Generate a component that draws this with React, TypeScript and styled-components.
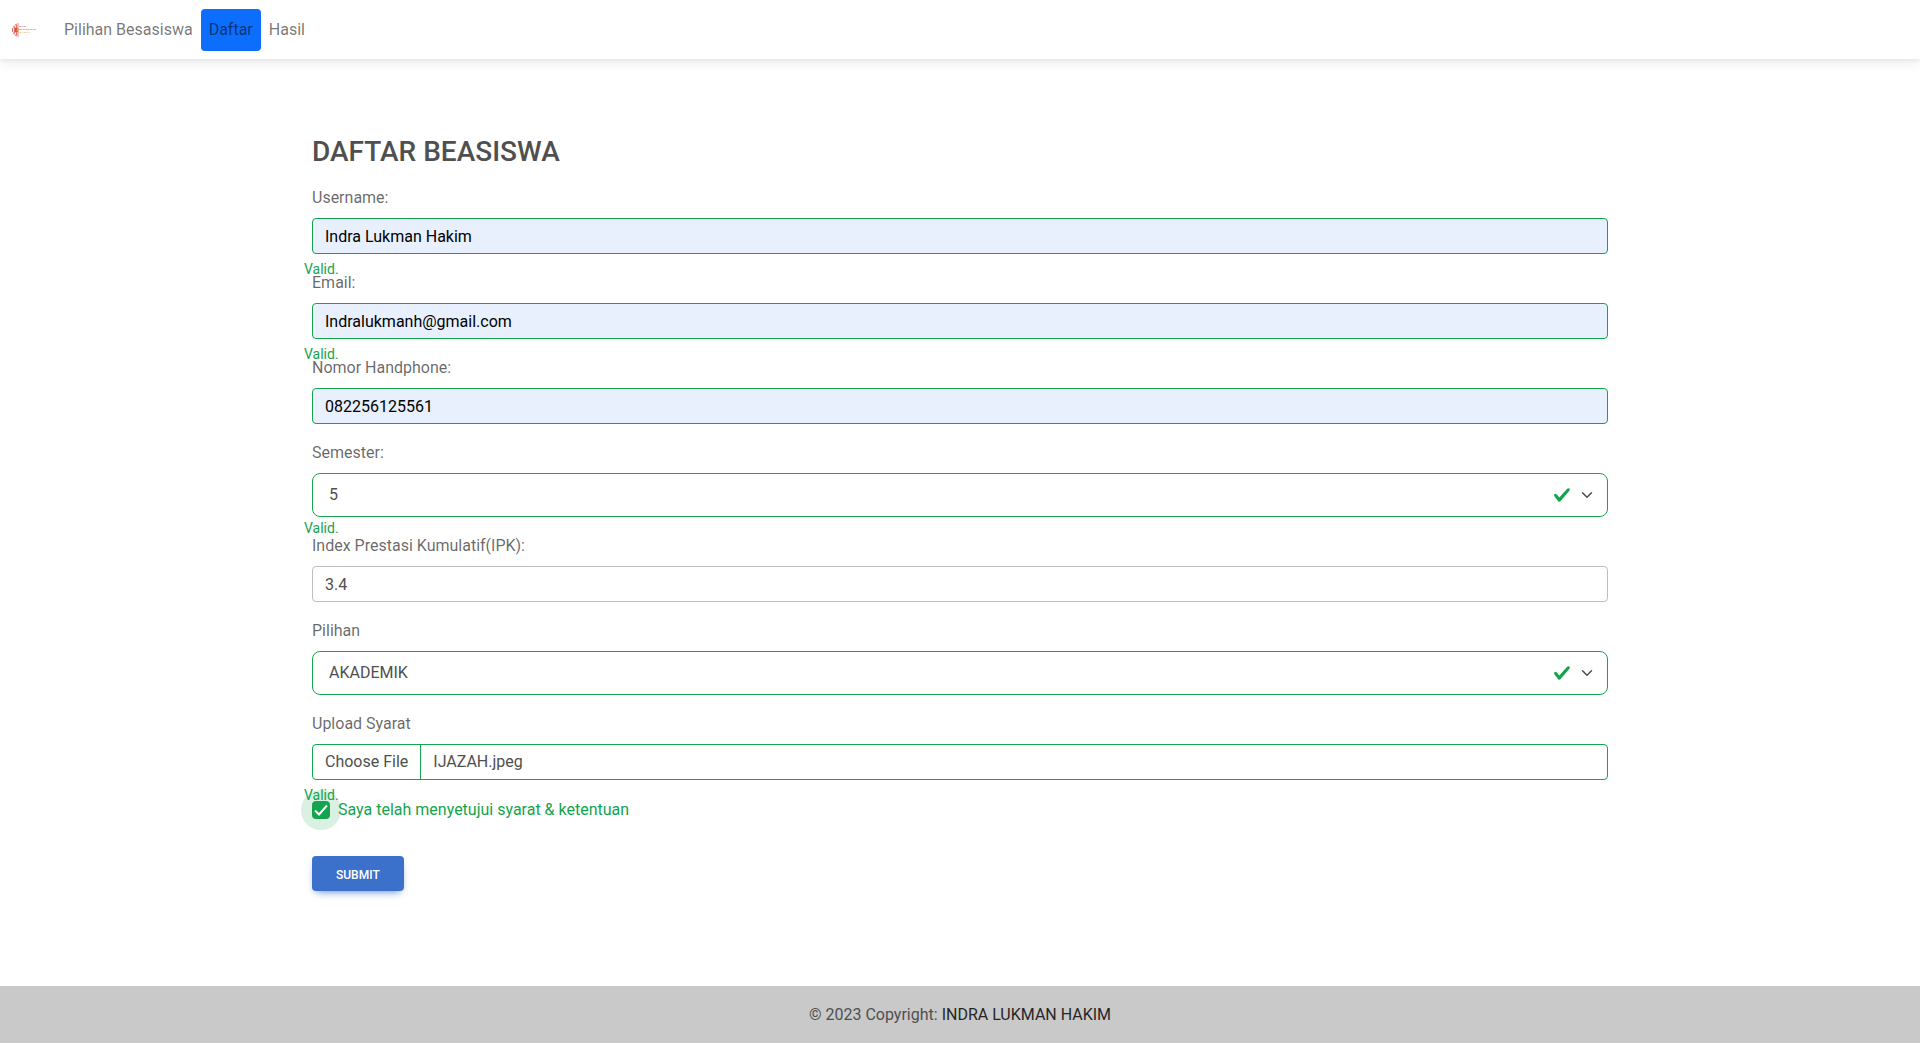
import React, { useState } from "react";
import styled, { createGlobalStyle, css } from "styled-components";

const success = "#14a44d";

const chevron = `url("data:image/svg+xml,%3csvg xmlns='http://www.w3.org/2000/svg' viewBox='0 0 16 16'%3e%3cpath fill='none' stroke='%234f4f4f' stroke-linecap='round' stroke-linejoin='round' stroke-width='2' d='m2 5 6 6 6-6'/%3e%3c/svg%3e")`;
const tick = `url("data:image/svg+xml,%3csvg xmlns='http://www.w3.org/2000/svg' viewBox='0 0 8 8'%3e%3cpath fill='%2314a44d' d='M2.3 6.73.6 4.53c-.4-1.04.46-1.4 1.1-.8l1.1 1.4 3.4-3.8c.6-.63 1.6-.27 1.2.7l-4 4.6c-.43.5-.8.4-1.1.1z'/%3e%3c/svg%3e")`;
const boxTick = `url("data:image/svg+xml,%3csvg xmlns='http://www.w3.org/2000/svg' viewBox='0 0 18 18'%3e%3cpath fill='none' stroke='white' stroke-width='2' d='M3 9.5 7 13.5 15 4.5'/%3e%3c/svg%3e")`;

const GlobalStyle = createGlobalStyle`
  *, *::before, *::after { box-sizing: border-box; }
  body {
    margin: 0;
    background: #fff;
    color: #4f4f4f;
    font-family: Roboto, sans-serif;
    font-size: 16px;
    line-height: 26px;
  }
  input, select, button { font: inherit; }
`;

const Navbar = styled.header`
  display: flex;
  align-items: center;
  gap: 20px;
  padding: 9px 12px 8px;
  background: #fff;
  box-shadow: 0 4px 12px rgba(0, 0, 0, 0.07), 0 2px 4px rgba(0, 0, 0, 0.05);
`;

const Brand = styled.a`
  display: flex;
  width: 24px;
`;

const Nav = styled.nav`
  display: flex;
`;

const NavLink = styled.a<{ $active?: boolean }>`
  padding: 8px;
  border-radius: 4px;
  color: rgba(0, 0, 0, 0.55);
  text-decoration: none;
  ${(p) => p.$active && css`background: #0d6efd;`}
`;

const Main = styled.main`
  max-width: 1320px;
  margin: 0 auto;
  padding: 76px 12px 95px;
`;

const Title = styled.h1`
  margin: 0 0 16px;
  font-size: 28px;
  font-weight: 500;
  line-height: 34px;
`;

const Form = styled.form`
  display: flex;
  flex-direction: column;
`;

const Field = styled.div`
  position: relative;
  margin-bottom: 16px;
`;

const Label = styled.label`
  display: block;
  margin-bottom: 8px;
  color: rgba(0, 0, 0, 0.6);
  line-height: 25px;
`;

const Input = styled.input<{ $filled?: boolean }>`
  display: block;
  width: 100%;
  height: 36px;
  padding: 4px 12px;
  border: 1px solid ${(p) => (p.$filled ? success : "#bdbdbd")};
  border-radius: 4px;
  outline: none;
  background: ${(p) => (p.$filled ? "#e8f0fe" : "#fff")};
  color: ${(p) => (p.$filled ? "#000" : "#4f4f4f")};
`;

const Select = styled.select`
  display: block;
  width: 100%;
  height: 44px;
  padding: 6px 64px 6px 16px;
  border: 1px solid ${success};
  border-radius: 8px;
  outline: none;
  appearance: none;
  background-color: #fff;
  background-image: ${chevron}, ${tick};
  background-repeat: no-repeat;
  background-position: right 12px center, right 36px center;
  background-size: 16px 12px, 18px 18px;
  color: #4f4f4f;
`;

const Feedback = styled.div<{ $close?: boolean }>`
  position: absolute;
  top: 100%;
  left: -8px;
  margin-top: ${(p) => (p.$close ? 0 : 4)}px;
  color: ${success};
  font-size: 14px;
  line-height: 22px;
`;

const FilePicker = styled.label`
  display: flex;
  height: 36px;
  border: 1px solid ${success};
  border-radius: 4px;
  line-height: 34px;
  cursor: pointer;
`;

const HiddenFile = styled.input`
  position: absolute;
  width: 1px;
  height: 1px;
  opacity: 0;
`;

const FileButton = styled.span`
  padding: 0 12px;
  border-right: 1px solid ${success};
`;

const FileName = styled.span`
  padding: 0 12px;
`;

const CheckRow = styled.div`
  display: flex;
  align-items: center;
  gap: 8px;
  margin-bottom: 32px;
  line-height: 28px;
`;

const Checkbox = styled.input`
  appearance: none;
  width: 18px;
  height: 18px;
  margin: 0;
  border: 2px solid ${success};
  border-radius: 4px;
  outline: none;
  position: relative;

  &:checked {
    background: ${success} ${boxTick} center / 18px 18px border-box no-repeat;
  }

  &::before {
    content: "";
    position: absolute;
    inset: -13px;
    border-radius: 50%;
    background: ${success};
    opacity: 0.16;
    clip-path: path(evenodd, "M0 0H40V40H0Z M15 11H25A4 4 0 0 1 29 15V25A4 4 0 0 1 25 29H15A4 4 0 0 1 11 25V15A4 4 0 0 1 15 11Z");
  }
`;

const CheckLabel = styled.label`
  color: ${success};
`;

const Submit = styled.button`
  align-self: flex-start;
  padding: 10px 24px 7px;
  border: 0;
  border-radius: 4px;
  background: #3b71ca;
  box-shadow: 0 4px 9px -4px #3b71ca;
  color: #fff;
  font-size: 12px;
  font-weight: 500;
  line-height: 18px;
  text-transform: uppercase;
  cursor: pointer;
`;

const Footer = styled.footer`
  padding: 16px;
  background: #c9c9c9;
  text-align: center;
  line-height: 25px;
`;

const FooterLink = styled.a`
  color: #262626;
  text-decoration: none;
`;

function Logo() {
  return (
    <svg width="24" height="16" viewBox="0 0 24 16" aria-hidden="true">
      <g fill="none" stroke="#e0453f" strokeWidth="1">
        <path d="M6 1V15" opacity=".6" />
        <path d="M5 2 3 3M5 14 3 13M3 4 1 5M3 12 1 11M.5 6V10" opacity=".75" />
        <path d="M2.5 5V11M4.500 3V13" strokeWidth="1.500" opacity=".75" />
      </g>
      <path d="M3 6H6V10H3Z" fill="#c9503a" />
      <path d="M4.500 6.500H6.500V9.500H4.500Z" fill="#dc9a3c" />
      <path d="M7 4.500H14" stroke="#ee8a88" strokeWidth="1" strokeDasharray="2 .5" opacity=".7" />
      <path d="M7 7.500H24" stroke="#e87b7b" strokeWidth="1" strokeDasharray="3 .5" opacity=".6" />
      <path d="M7 10.500H18" stroke="#e3c184" strokeWidth="1" strokeDasharray="2 .5" opacity=".6" />
    </svg>
  );
}

interface TextFieldProps {
  id: string;
  label: string;
  value: string;
  type?: string;
  filled?: boolean;
  valid?: boolean;
}

function TextField({ id, label, value, type = "text", filled, valid }: TextFieldProps) {
  return (
    <Field>
      <Label htmlFor={id}>{label}</Label>
      <Input id={id} type={type} defaultValue={value} $filled={filled} />
      {valid && <Feedback>Valid.</Feedback>}
    </Field>
  );
}

interface SelectFieldProps {
  id: string;
  label: string;
  value: string;
  options: string[];
  valid?: boolean;
}

function SelectField({ id, label, value, options, valid }: SelectFieldProps) {
  return (
    <Field>
      <Label htmlFor={id}>{label}</Label>
      <Select id={id} defaultValue={value}>
        {options.map((o) => (
          <option key={o}>{o}</option>
        ))}
      </Select>
      {valid && <Feedback $close>Valid.</Feedback>}
    </Field>
  );
}

export default function App() {
  const [fileName, setFileName] = useState("IJAZAH.jpeg");

  return (
    <>
      <GlobalStyle />
      <Navbar>
        <Brand href="#" aria-label="Beranda">
          <Logo />
        </Brand>
        <Nav>
          <NavLink href="#pilihan">Pilihan Besasiswa</NavLink>
          <NavLink href="#daftar" $active>Daftar</NavLink>
          <NavLink href="#hasil">Hasil</NavLink>
        </Nav>
      </Navbar>
      <Main>
        <Title>DAFTAR BEASISWA</Title>
        <Form onSubmit={(e) => e.preventDefault()}>
          <TextField id="username" label="Username:" value="Indra Lukman Hakim" filled valid />
          <TextField id="email" label="Email:" type="email" value="Indralukmanh@gmail.com" filled valid />
          <TextField id="phone" label="Nomor Handphone:" type="tel" value="082256125561" filled />
          <SelectField id="semester" label="Semester:" value="5" options={["1", "2", "3", "4", "5", "6", "7", "8"]} valid />
          <TextField id="ipk" label="Index Prestasi Kumulatif(IPK):" value="3.4" />
          <SelectField id="pilihan" label="Pilihan" value="AKADEMIK" options={["AKADEMIK", "NON AKADEMIK"]} />
          <Field>
            <Label htmlFor="syarat">Upload Syarat</Label>
            <FilePicker>
              <HiddenFile
                id="syarat"
                type="file"
                onChange={(e) => setFileName(e.target.files?.[0]?.name ?? "")}
              />
              <FileButton>Choose File</FileButton>
              <FileName>{fileName}</FileName>
            </FilePicker>
            <Feedback>Valid.</Feedback>
          </Field>
          <CheckRow>
            <Checkbox id="setuju" type="checkbox" defaultChecked />
            <CheckLabel htmlFor="setuju">Saya telah menyetujui syarat &amp; ketentuan</CheckLabel>
          </CheckRow>
          <Submit type="submit">Submit</Submit>
        </Form>
      </Main>
      <Footer>
        © 2023 Copyright: <FooterLink href="#">INDRA LUKMAN HAKIM</FooterLink>
      </Footer>
    </>
  );
}
